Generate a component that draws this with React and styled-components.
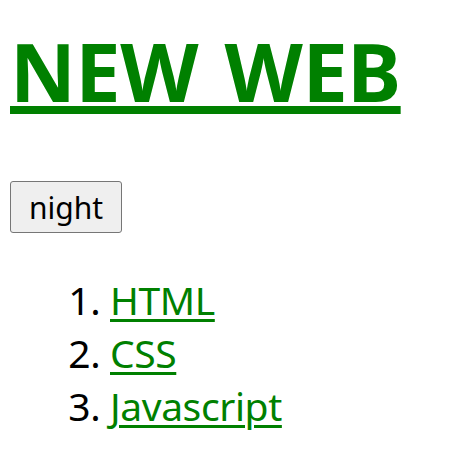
import React, { useState } from 'react';
import styled, { createGlobalStyle } from 'styled-components';

const GlobalStyle = createGlobalStyle`
  body {
    margin: 0;
    padding: 0 10px;
    background: #ffffff;
    font-family: 'Noto Sans', 'Open Sans', sans-serif;
  }
`;

const Title = styled.h1`
  margin: 0;
  padding-top: 22px;
  font-size: 81px;
  line-height: 98px;
  font-weight: 700;
  letter-spacing: -0.5px;
  word-spacing: 6px;
`;

const Link = styled.a`
  color: green;
  text-decoration: underline;
  text-decoration-thickness: ${({ $thick }) => $thick || '3px'};
  text-underline-offset: ${({ $offset }) => $offset || '4px'};
`;

const NightButton = styled.button`
  display: block;
  margin-top: 61px;
  width: 112px;
  height: 52px;
  padding: 0 6px;
  font-family: 'Noto Sans', 'Open Sans', sans-serif;
  font-size: 30px;
  color: #000;
  background: #efefef;
  border: 1px solid #767676;
  border-radius: 3px;
`;

const List = styled.ol`
  margin: 40px 0 0;
  padding-left: 100px;
  font-size: 39px;
  line-height: 53px;
  letter-spacing: -0.4px;
`;

const Item = styled.li`
  padding-left: 0;
`;

export default function App() {
  const [night, setNight] = useState(false);
  const items = ['HTML', 'CSS', 'Javascript'];
  return (
    <>
      <GlobalStyle />
      <Title>
        <Link href="#" $thick="8px" $offset="4px">NEW WEB</Link>
      </Title>
      <NightButton onClick={() => setNight(!night)}>night</NightButton>
      <List>
        {items.map((t) => (
          <Item key={t}><Link href="#">{t}</Link></Item>
        ))}
      </List>
    </>
  );
}
